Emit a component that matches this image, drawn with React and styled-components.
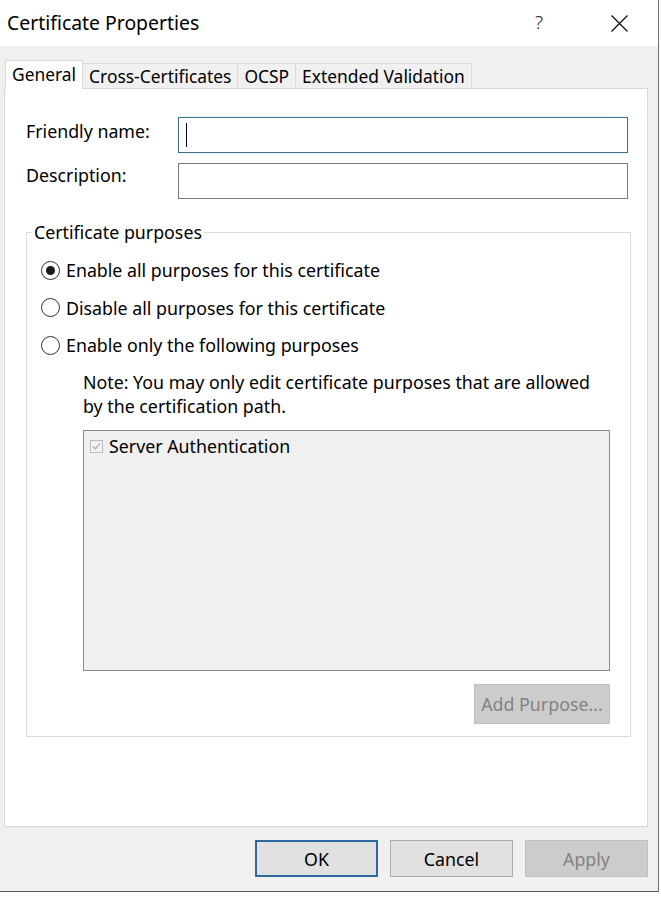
import React from "react";
import styled, { createGlobalStyle } from "styled-components";

const GlobalStyle = createGlobalStyle`
  html, body {
    margin: 0;
    padding: 0;
    background: #ffffff;
  }
  body {
    font-family: "Noto Sans", "Open Sans", sans-serif;
    color: #000;
  }
`;

const Window = styled.div`
  width: 659px;
  height: 892px;
  box-sizing: border-box;
  border-right: 1px solid #707070;
  border-bottom: 1px solid #5a5a5a;
  display: flex;
  flex-direction: column;
  background: #f0f0f0;
`;

const TitleBar = styled.div`
  height: 46px;
  background: #ffffff;
  display: flex;
  align-items: center;
  padding-left: 7px;
`;

const Title = styled.div`
  font-size: 19.4px;
  flex: 1;
  padding-bottom: 2px;
`;

const HelpGlyph = styled.div`
  font-size: 19px;
  width: 20px;
  text-align: center;
  margin-right: 62px;
  padding-bottom: 2px;
  font-weight: 300;
  color: #222;
`;

const CloseIcon = styled.svg`
  width: 17px;
  height: 17px;
  margin-right: 30px;
`;

const Body = styled.div`
  flex: 1;
  display: flex;
  flex-direction: column;
  padding: 14px 10px 0 4px;
`;

const TabStrip = styled.div`
  display: flex;
  align-items: flex-end;
  height: 29px;
  margin-left: 1px;
  margin-bottom: -1px;
  position: relative;
  z-index: 1;
`;

const Tab = styled.div`
  box-sizing: border-box;
  height: ${(p) => (p.$active ? "29px" : "26px")};
  padding: ${(p) => (p.$active ? "0 6px 3px 6px" : "0 6px")};
  border: 1px solid #d9d9d9;
  border-bottom: ${(p) => (p.$active ? "none" : "1px solid #d9d9d9")};
  background: ${(p) => (p.$active ? "#ffffff" : "#f0f0f0")};
  font-size: 17.4px;
  display: flex;
  align-items: center;
  white-space: nowrap;
  & + & {
    margin-left: -1px;
  }
`;

const Panel = styled.div`
  height: 739px;
  box-sizing: border-box;
  background: #ffffff;
  border: 1px solid #d9d9d9;
  padding: 28px 15px 0 21px;
  display: flex;
  flex-direction: column;
`;

const FieldRow = styled.div`
  display: flex;
  align-items: flex-start;
  margin-bottom: 10px;
`;

const FieldLabel = styled.div`
  width: 152px;
  font-size: 17.8px;
  line-height: 24px;
  padding-top: ${(p) => p.$offset || "2px"};
`;

const TextBox = styled.div`
  width: 450px;
  height: 36px;
  box-sizing: border-box;
  border: 1px solid ${(p) => (p.$focused ? "#3f6f8f" : "#7a7a7a")};
  box-shadow: ${(p) => (p.$focused ? "0 0 2px rgba(160, 220, 240, 0.6)" : "none")};
  background: #fff;
  padding: 5px 7px;
  display: flex;
  align-items: stretch;
`;

const Caret = styled.div`
  width: 1px;
  background: #000;
`;

const GroupBox = styled.fieldset`
  margin: 12px 0 0 0;
  width: 605px;
  box-sizing: border-box;
  border: 1px solid #dcdcdc;
  padding: 0 20px 12px 14px;
  display: flex;
  flex-direction: column;
`;

const Legend = styled.legend`
  font-size: 17.8px;
  line-height: 22px;
  padding: 0 2px;
  margin-left: -9px;
`;

const RadioList = styled.div`
  display: flex;
  flex-direction: column;
  gap: 13.5px;
  margin-top: 15px;
`;

const RadioRow = styled.label`
  display: flex;
  align-items: center;
  height: 24px;
  font-size: 17.8px;
  gap: 6px;
`;

const RadioCircle = styled.span`
  width: 19px;
  height: 19px;
  box-sizing: border-box;
  border-radius: 50%;
  border: 1px solid #333;
  background: #fff;
  display: flex;
  align-items: center;
  justify-content: center;
  &::after {
    content: "";
    width: 9px;
    height: 9px;
    border-radius: 50%;
    background: ${(p) => (p.$checked ? "#1a1a1a" : "transparent")};
  }
`;

const Indented = styled.div`
  margin-left: 42px;
  display: flex;
  flex-direction: column;
`;

const Note = styled.div`
  font-size: 17.8px;
  line-height: 24px;
  margin-top: 13px;
`;

const PurposeList = styled.div`
  margin-top: 12px;
  height: 241px;
  box-sizing: border-box;
  background: #f0f0f0;
  border: 1px solid #8c8c8c;
  padding: 5px 6px;
`;

const PurposeItem = styled.div`
  display: flex;
  align-items: center;
  gap: 6px;
  font-size: 17.8px;
  line-height: 20px;
`;

const CheckBox = styled.svg`
  width: 13px;
  height: 13px;
  flex-shrink: 0;
`;

const GroupActions = styled.div`
  display: flex;
  justify-content: flex-end;
  margin-top: 13px;
`;

const Button = styled.button`
  font-family: inherit;
  font-size: 17.8px;
  box-sizing: border-box;
  width: ${(p) => p.$width || "123px"};
  height: ${(p) => p.$height || "37px"};
  margin: 0;
  padding: 0;
  border: ${(p) =>
    p.$default ? "2px solid #2e6aa0" : p.disabled ? "1px solid #bfbfbf" : "1px solid #adadad"};
  background: ${(p) => (p.disabled ? "#cccccc" : "#e1e1e1")};
  color: ${(p) => (p.disabled ? "#838383" : "#000")};
`;

const ButtonBar = styled.div`
  display: flex;
  justify-content: flex-end;
  gap: 12px;
  padding-top: 13px;
`;

export default function App() {
  return (
    <>
      <GlobalStyle />
      <Window>
        <TitleBar>
          <Title>Certificate Properties</Title>
          <HelpGlyph>?</HelpGlyph>
          <CloseIcon viewBox="0 0 17 17">
            <path d="M0.5 0.5 L16.5 16.5 M16.5 0.5 L0.5 16.5" stroke="#000" strokeWidth="1.1" fill="none" />
          </CloseIcon>
        </TitleBar>
        <Body>
          <TabStrip>
            <Tab $active>General</Tab>
            <Tab>Cross-Certificates</Tab>
            <Tab>OCSP</Tab>
            <Tab>Extended Validation</Tab>
          </TabStrip>
          <Panel>
            <FieldRow>
              <FieldLabel>Friendly name:</FieldLabel>
              <TextBox $focused>
                <Caret />
              </TextBox>
            </FieldRow>
            <FieldRow>
              <FieldLabel $offset="0px">Description:</FieldLabel>
              <TextBox />
            </FieldRow>
            <GroupBox>
              <Legend>Certificate purposes</Legend>
              <RadioList>
                <RadioRow>
                  <RadioCircle $checked />
                  Enable all purposes for this certificate
                </RadioRow>
                <RadioRow>
                  <RadioCircle />
                  Disable all purposes for this certificate
                </RadioRow>
                <RadioRow>
                  <RadioCircle />
                  Enable only the following purposes
                </RadioRow>
              </RadioList>
              <Indented>
                <Note>
                  Note: You may only edit certificate purposes that are allowed
                  <br />
                  by the certification path.
                </Note>
                <PurposeList>
                  <PurposeItem>
                    <CheckBox viewBox="0 0 13 13">
                      <rect x="0.5" y="0.5" width="12" height="12" fill="#f4f4f4" stroke="#bcbcbc" />
                      <path d="M3 6.5 L5.3 9 L10 3.5" stroke="#b0b0b0" strokeWidth="1.3" fill="none" />
                    </CheckBox>
                    Server Authentication
                  </PurposeItem>
                </PurposeList>
                <GroupActions>
                  <Button disabled $width="136px" $height="40px">
                    Add Purpose...
                  </Button>
                </GroupActions>
              </Indented>
            </GroupBox>
          </Panel>
          <ButtonBar>
            <Button $default>OK</Button>
            <Button>Cancel</Button>
            <Button disabled>Apply</Button>
          </ButtonBar>
        </Body>
      </Window>
    </>
  );
}
